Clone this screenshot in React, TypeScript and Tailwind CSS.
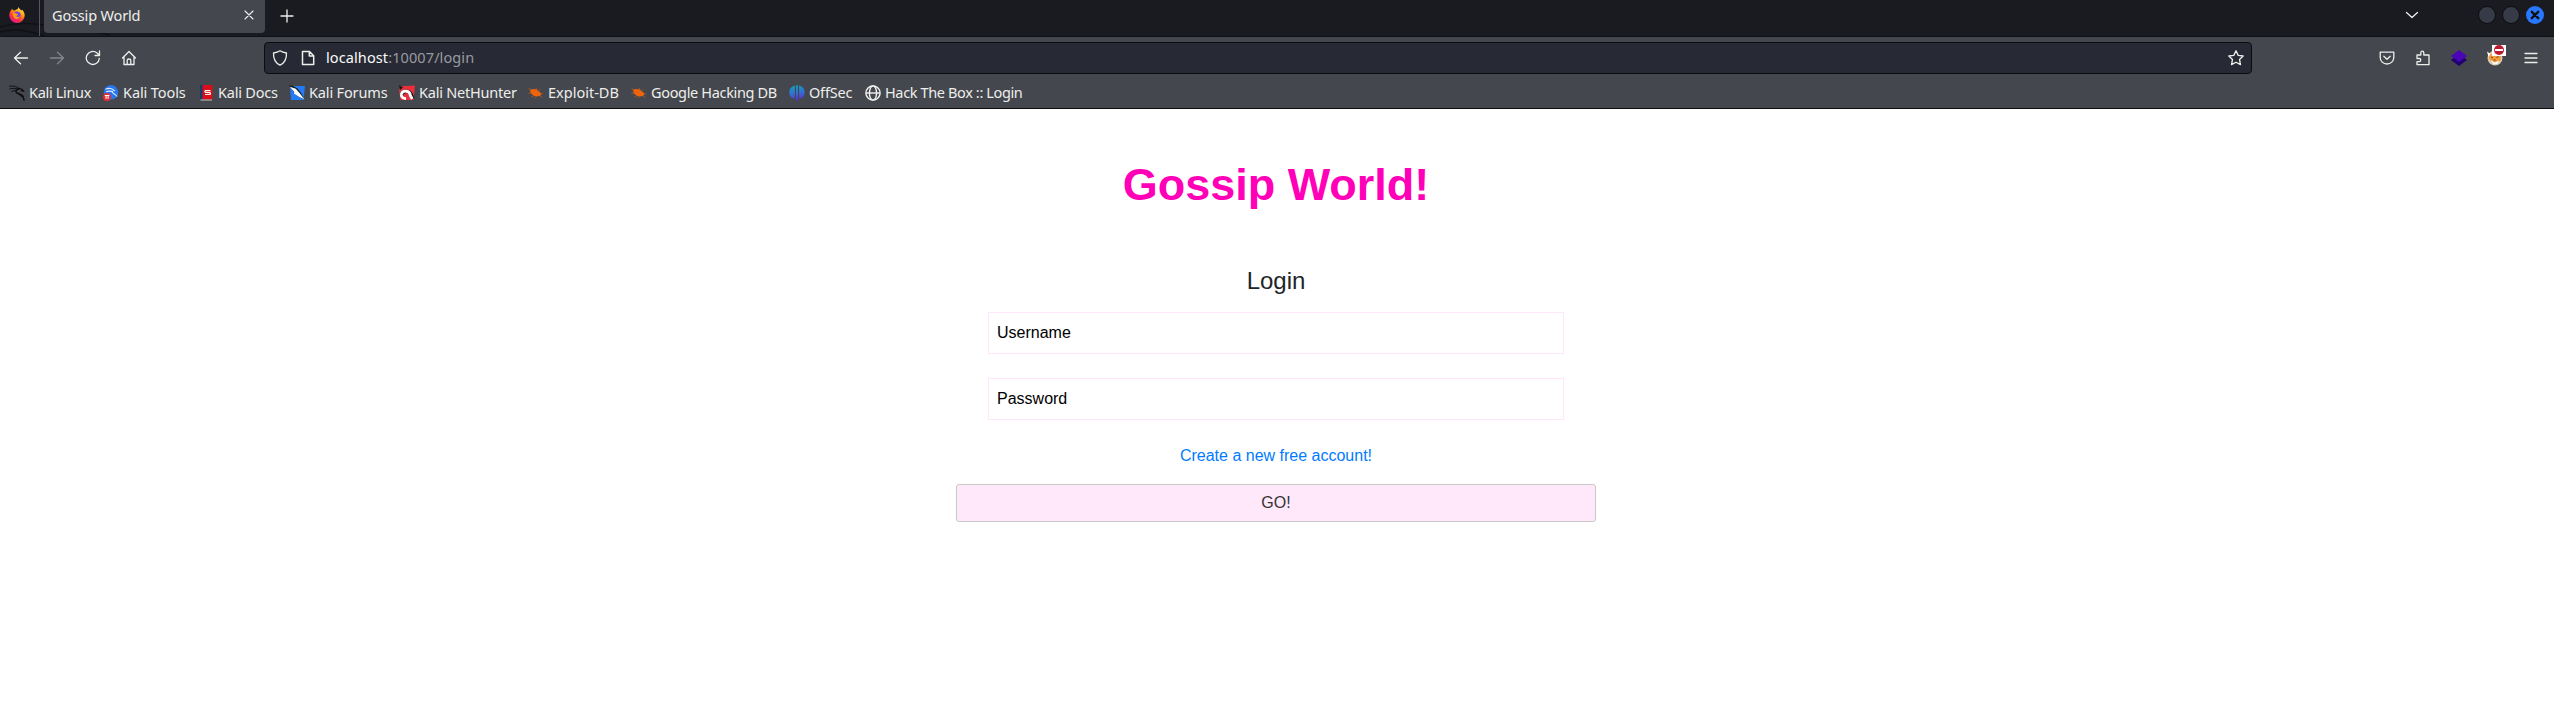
import type { ReactNode } from "react";

function FirefoxIcon() {
  return (
    <svg viewBox="0 0 16 16" className="size-4">
      <defs>
        <linearGradient id="ff" x1="0.8" y1="0.05" x2="0.25" y2="1">
          <stop offset="0" stopColor="#fff44f" />
          <stop offset="0.35" stopColor="#ff980e" />
          <stop offset="0.65" stopColor="#ff3647" />
          <stop offset="1" stopColor="#e31587" />
        </linearGradient>
      </defs>
      <path d="M2.4 3.1 3 1.8l1.3 1.5 1.8.1C7 2.4 8 2.2 8.6 2.3L9.6 0c.4 1.6 1.5 2 2.5 3.4l1-.6c1.6 1.7 2.6 3.5 2.6 5.7A7.7 7.7 0 0 1 8 16 7.8 7.8 0 0 1 .3 8.3c0-2 .8-4 2.1-5.2z" fill="url(#ff)" />
      <circle cx="8" cy="8.2" r="3.6" fill="#7542e5" />
      <path d="M3.8 6.2c1.2-.7 2.500-.3 3.600.5 1 .2 1.700.2 1.800.7-.2.900-1.700.900-2 1.700.7 1.300 2.600 1.100 3.700.2-.5 2.300-2.500 3.100-4.200 2.500-2.200-.8-3.300-3.200-2.900-5.600z" fill="#ff980e" />
    </svg>
  );
}

function KaliDragon() {
  return (
    <svg viewBox="0 0 16 16" className="size-4 shrink-0" fill="none" stroke="#0c0d10" strokeLinecap="round">
      <path d="M.5 1.200C4 .6 7.500 1.300 10.500 3.500M.8 3.900c3-1 6-.6 8.400.2M2.500 6.700c2-.9 3-1.200 4.500-1.400" strokeWidth=".9" />
      <path d="M10.800 3.500C7.600 4.200 6.200 6 7.500 7.700c1.500 1.500 4.900.8 6.300 3.100.8 1.300.6 2.800 1.300 4.300" strokeWidth="1.400" />
      <path d="M10 3.800l3 .5 1.700 1.800-2.500-.2M9 8.200c1.600 1.500 3 3.300 5 3.800" strokeWidth="1.100" />
    </svg>
  );
}

function ToolsIcon() {
  return (
    <svg viewBox="0 0 16 16" className="size-4 shrink-0">
      <circle cx="8" cy="7.300" r="7.200" fill="#2677ee" />
      <path d="M2.500 4.300c4-1.800 7-.6 9.200 1.700M3 6.800c3-1 5-.7 6.500 0M9.500 6c-1.200 3 3.500 2.500 4.500 5.500" fill="none" stroke="#dceafe" strokeWidth="1.100" />
      <circle cx="4" cy="12" r="4" fill="#e52d33" />
      <path d="M1.800 10.500h4.600M3.100 10.500v3.400M5.100 10.500v3.400" stroke="#fff" strokeWidth="1" fill="none" />
    </svg>
  );
}

function DocsIcon() {
  return (
    <svg viewBox="0 0 13 16" className="h-4 w-[13px] shrink-0">
      <path d="M0 0h3v14.500H0z" fill="#173a70" />
      <path d="M2.500 0H12.500v14.500H2.500z" fill="#d90f17" />
      <path d="M.5 14.500H12v1H.5z" fill="#c6c7c9" />
      <path d="M10.500 5.700H5.900c-1.300 0-1.300 1.700-.2 1.800l3.900.2c1.300.2 1.100 1.800-.2 1.800H5" stroke="#fff" strokeWidth="1.200" fill="none" />
    </svg>
  );
}

function ForumsIcon() {
  return (
    <svg viewBox="0 0 16 16" className="size-4 shrink-0">
      <path d="M1 1h15l-1.500 14H2z" fill="#247cf4" />
      <path d="M0 .5h3l5.500 3L12 8l3.500 6.500-3.500-1.500-6-4.500z" fill="#17191d" />
      <path d="M.8 1.800l6 2L10.500 8l5 6.500-5-2.500L5 8.500l.3-1.500z" fill="#fff" />
    </svg>
  );
}

function NetHunterIcon() {
  return (
    <svg viewBox="0 0 16 16" className="size-4 shrink-0">
      <path d="M2 1.200 16 .5 14.500 15H1.500L0 5z" fill="#e9303b" />
      <path d="M2.500 10.500c0-6 9.500-5 10 0l1.500 3.500" fill="none" stroke="#17191d" strokeWidth="3.600" />
      <path d="M2.200 9.500C3.500 4.500 11 5.500 11.300 10.500l2 3.500M2.200 9.500c0 3 2.500 4.200 4.800 4" fill="none" stroke="#fff" strokeWidth="2.800" />
      <path d="M0 0l4 2.500L1 5z" fill="#17191d" />
    </svg>
  );
}

function BugIcon() {
  return (
    <svg viewBox="0 0 16 16" className="size-4 shrink-0">
      <path d="M2 5.500C4.500 3 8.500 4 10.500 6.200c2 .7 2.900 2.200 2.500 3.500-1 1.500-3 1.900-4.700 1.500C5 11 2.500 8.500 2 5.500z" fill="#ed640c" />
      <path d="M.5 3.500l3.500 2M.5 8.500l4-1M3.500 12l3.500-2M7 13l2-2.500M8 3l1 3M12 4.500l-2 2.500M15 8.500l-3 .5M14.500 12.500l-4-3" stroke="#ed640c" strokeWidth=".6" />
    </svg>
  );
}

function OffSecIcon() {
  return (
    <svg viewBox="0 0 16 16" className="size-4 shrink-0">
      <defs>
        <linearGradient id="os" gradientUnits="userSpaceOnUse" x1="6" y1="0" x2="9" y2="16">
          <stop offset="0" stopColor="#139fb8" />
          <stop offset="0.5" stopColor="#3470d2" />
          <stop offset="1" stopColor="#5b28c8" />
        </linearGradient>
      </defs>
      <path d="M5.900.6v13.200C2 13.300.3 10.500.3 7.500c0-3.200 2-6 5.600-6.900zM10.100.6v13.200c3.900-.5 5.600-3.300 5.600-6.300 0-3.200-2-6-5.600-6.900zM7 .2h2V15.500H7z" fill="url(#os)" />
    </svg>
  );
}

function GlobeIcon() {
  return (
    <svg viewBox="0 0 16 16" className="size-4 shrink-0" fill="none" stroke="#f2f2f2" strokeWidth="1.400">
      <circle cx="8" cy="8" r="7.100" />
      <ellipse cx="8" cy="8" rx="3.600" ry="7.100" />
      <path d="M1 8h14" />
    </svg>
  );
}

function Stroke({ d, color = "#eeeeec", width = 1.3 }: { d: string; color?: string; width?: number }) {
  return (
    <svg viewBox="0 0 16 16" className="size-4 shrink-0" fill="none" stroke={color} strokeWidth={width} strokeLinecap="round" strokeLinejoin="round">
      <path d={d} />
    </svg>
  );
}

const bookmarks: { label: string; icon: ReactNode; box: string; text: string }[] = [
  { label: "Kali Linux", icon: <KaliDragon />, box: "w-[94px]", text: "ml-1 tracking-[-0.32px]" },
  { label: "Kali Tools", icon: <ToolsIcon />, box: "w-[97px]", text: "ml-1 tracking-[-0.1px]" },
  { label: "Kali Docs", icon: <DocsIcon />, box: "w-[89px]", text: "ml-[5px] tracking-[-0.22px]" },
  { label: "Kali Forums", icon: <ForumsIcon />, box: "w-[110px]", text: "ml-1 tracking-[-0.15px]" },
  { label: "Kali NetHunter", icon: <NetHunterIcon />, box: "w-[129px]", text: "ml-1 tracking-[-0.23px]" },
  { label: "Exploit-DB", icon: <BugIcon />, box: "w-[103px]", text: "ml-1" },
  { label: "Google Hacking DB", icon: <BugIcon />, box: "w-[158px]", text: "ml-1 tracking-[-0.34px]" },
  { label: "OffSec", icon: <OffSecIcon />, box: "w-[76px]", text: "ml-1 tracking-[-0.2px]" },
  { label: "Hack The Box :: Login", icon: <GlobeIcon />, box: "w-[160px]", text: "ml-1 tracking-[-0.37px]" },
];

function TabBar() {
  return (
    <div className="relative flex h-[37px] items-start border-b border-[#101115] bg-[#1a1b20]">
      <svg viewBox="0 0 140 36" className="absolute left-0 top-0 h-9 w-[140px]" fill="none" stroke="#101115">
        <path d="M0 27C14 23 26 22 44 25M0 32c14-4 26-2 44 4M110 35c-4-1.500-8-2-14-2.500" strokeWidth="1.500" />
      </svg>
      <div className="relative flex h-9 w-10 justify-start border-r border-[#55575c] pl-[9px] pt-[7px]">
        <FirefoxIcon />
      </div>
      <div className="relative ml-1 flex h-[33px] w-[221px] items-center justify-between rounded-b-[4px] bg-[#44474d] pl-2 pr-2">
        <span className="pb-[3px] text-[14.500px] leading-5 tracking-[-0.16px] text-[#eeeeec]">Gossip World</span>
        <span className="-mt-[3px]">
          <Stroke d="M4 4l8 8M12 4l-8 8" width={1.100} />
        </span>
      </div>
      <div className="ml-[14px] mt-2">
        <Stroke d="M8 2v12M2 8h12" />
      </div>
      <div className="ml-auto flex items-center pr-[10px] pt-[6px]">
        <div className="mr-[58px]">
          <Stroke d="M2.500 5.500 8 10.500l5.500-5" />
        </div>
        <span className="mr-[6px] size-[18px] rounded-full border border-[#0c0d10] bg-[#373b47]" />
        <span className="mr-[6px] size-[18px] rounded-full border border-[#0c0d10] bg-[#373b47]" />
        <span className="flex size-[18px] items-center justify-center rounded-full bg-[#2777ff]">
          <Stroke d="M4.800 4.800l6.400 6.400M11.200 4.800l-6.400 6.400" color="#101115" width={2.400} />
        </span>
      </div>
    </div>
  );
}

function Toolbar() {
  return (
    <div className="flex h-[41px] items-center">
      <div className="flex w-[264px] gap-5 pl-[13px]">
        <Stroke d="M1.500 8h13M7.500 2.200 1.500 8l6 5.800" />
        <Stroke d="M1.500 8h13M8.500 2.200l6 5.800-6 5.800" color="#85878b" />
        <Stroke d="M14.300 8.500A6.500 6.500 0 1 1 12 3l2.200 2M14.500 1v4.500H10" />
        <Stroke d="M1.500 8 8 1.500 14.500 8M3 7v7.500h10V7M6.200 14.500V10.300Q6.200 9 8 9t1.800 1.300v4.200" />
      </div>
      <div className="flex h-8 w-[1988px] items-center rounded-[4px] border border-[#0c0d11] bg-[#272a34] pl-[7px] pr-[7px]">
        <Stroke d="M8 .8C6 2.200 4 2.700 1.500 3c-.2 6 1.200 9.700 6.500 12.200C13.300 12.700 14.700 9 14.500 3 12 2.700 10 2.200 8 .8z" />
        <span className="ml-3">
          <Stroke d="M2.500 1.500h7L13.700 5.700v8.800H2.500zM9.300 1.500v4.400h4.400" width={1.500} />
        </span>
        <span className="ml-[10px] pb-[2px] text-[14.500px] leading-5 tracking-[0.1px] text-[#999aa0]">
          <span className="text-[#fafafa]">localhost</span>:10007/login
        </span>
        <span className="ml-auto">
          <Stroke d="M8 .8l2.200 4.600 5 .6-3.700 3.500 1 5.100L8 12.200l-4.500 2.400 1-5.100L.8 6l5-.6z" />
        </span>
      </div>
      <div className="ml-auto flex items-center gap-5 pr-[15px]">
        <Stroke d="M1.200 2.200h13.600v5.300a6.800 6.500 0 0 1-13.600 0zM4.800 6.200 8 9.200l3.200-3" />
        <Stroke d="M2 5h3.800V2.700a1.500 1.500 0 0 1 3 0V5H14v9.700H2v-3h2.200a1.600 1.600 0 0 0 0-3.200H2z" />
        <svg viewBox="0 0 16 16" className="size-4">
          <path d="M0 10l8 6 8-6-8-6z" fill="#21006f" />
          <path d="M0 6l8 6 8-6-8-6z" fill="#4a05b5" />
        </svg>
        <div className="relative size-4">
          <svg viewBox="0 0 16 16" className="size-4">
            <circle cx="8" cy="8" r="7.500" fill="#d9c8b5" />
            <path d="M1.500 3.500 5 4.500l6-1 3 2-.5 5L8 14l-5.500-4z" fill="#f59a37" />
            <path d="M0 1.500 3.500 4 1.500 7zM3 10l5 2.500 4-2-1 3-4 1z" fill="#fff" />
            <path d="M4 7l2 1M9.500 7.500l2-.8M6.500 10h2" stroke="#5d4632" strokeWidth="1" />
          </svg>
          <span className="absolute -top-[5px] left-[5px] flex h-[11px] w-[14px] items-center justify-center bg-white">
            <span className="flex size-[10px] items-center justify-center rounded-full bg-[#be1931]">
              <span className="h-[2px] w-2 bg-white" />
            </span>
          </span>
        </div>
        <Stroke d="M2 3.500h12M2 8h12M2 12.500h12" />
      </div>
    </div>
  );
}

function BookmarksBar() {
  return (
    <div className="flex h-[30px] items-center pl-[9px]">
      {bookmarks.map((b) => (
        <div key={b.label} className={`flex shrink-0 items-center ${b.box}`}>
          {b.icon}
          <span className={`whitespace-nowrap pb-[2px] text-[14.500px] leading-5 text-[#eeeeec] ${b.text}`}>{b.label}</span>
        </div>
      ))}
    </div>
  );
}

export default function App() {
  return (
    <div className="h-[718px] w-[2554px] overflow-hidden bg-white font-['Liberation_Sans',sans-serif]">
      <header className="h-[109px] border-b border-[#0c0c0f] bg-[#44474d] font-['Noto_Sans',sans-serif]">
        <TabBar />
        <Toolbar />
        <BookmarksBar />
      </header>
      <main className="mx-auto flex w-[640px] translate-x-[-1px] flex-col items-center pt-[49px]">
        <h1 className="text-[45px] font-bold leading-[54px] text-[#ff00b8]">Gossip World!</h1>
        <h2 className="mt-[54px] text-2xl leading-[29px] text-[#212529]">Login</h2>
        <input
          placeholder="Username"
          className="mt-[17px] h-[42px] w-[576px] border border-[#ffe6fa] px-2 text-base text-black outline-none placeholder:text-black"
        />
        <input
          placeholder="Password"
          className="mt-6 h-[42px] w-[576px] border border-[#ffe6fa] px-2 text-base text-black outline-none placeholder:text-black"
        />
        <a className="mt-6 text-base leading-6 text-[#007bff]">Create a new free account!</a>
        <button className="mt-4 h-[38px] w-full rounded-[3px] border border-[#c8c8c8] bg-[#ffe8fa] text-base text-[#333]">GO!</button>
      </main>
    </div>
  );
}
